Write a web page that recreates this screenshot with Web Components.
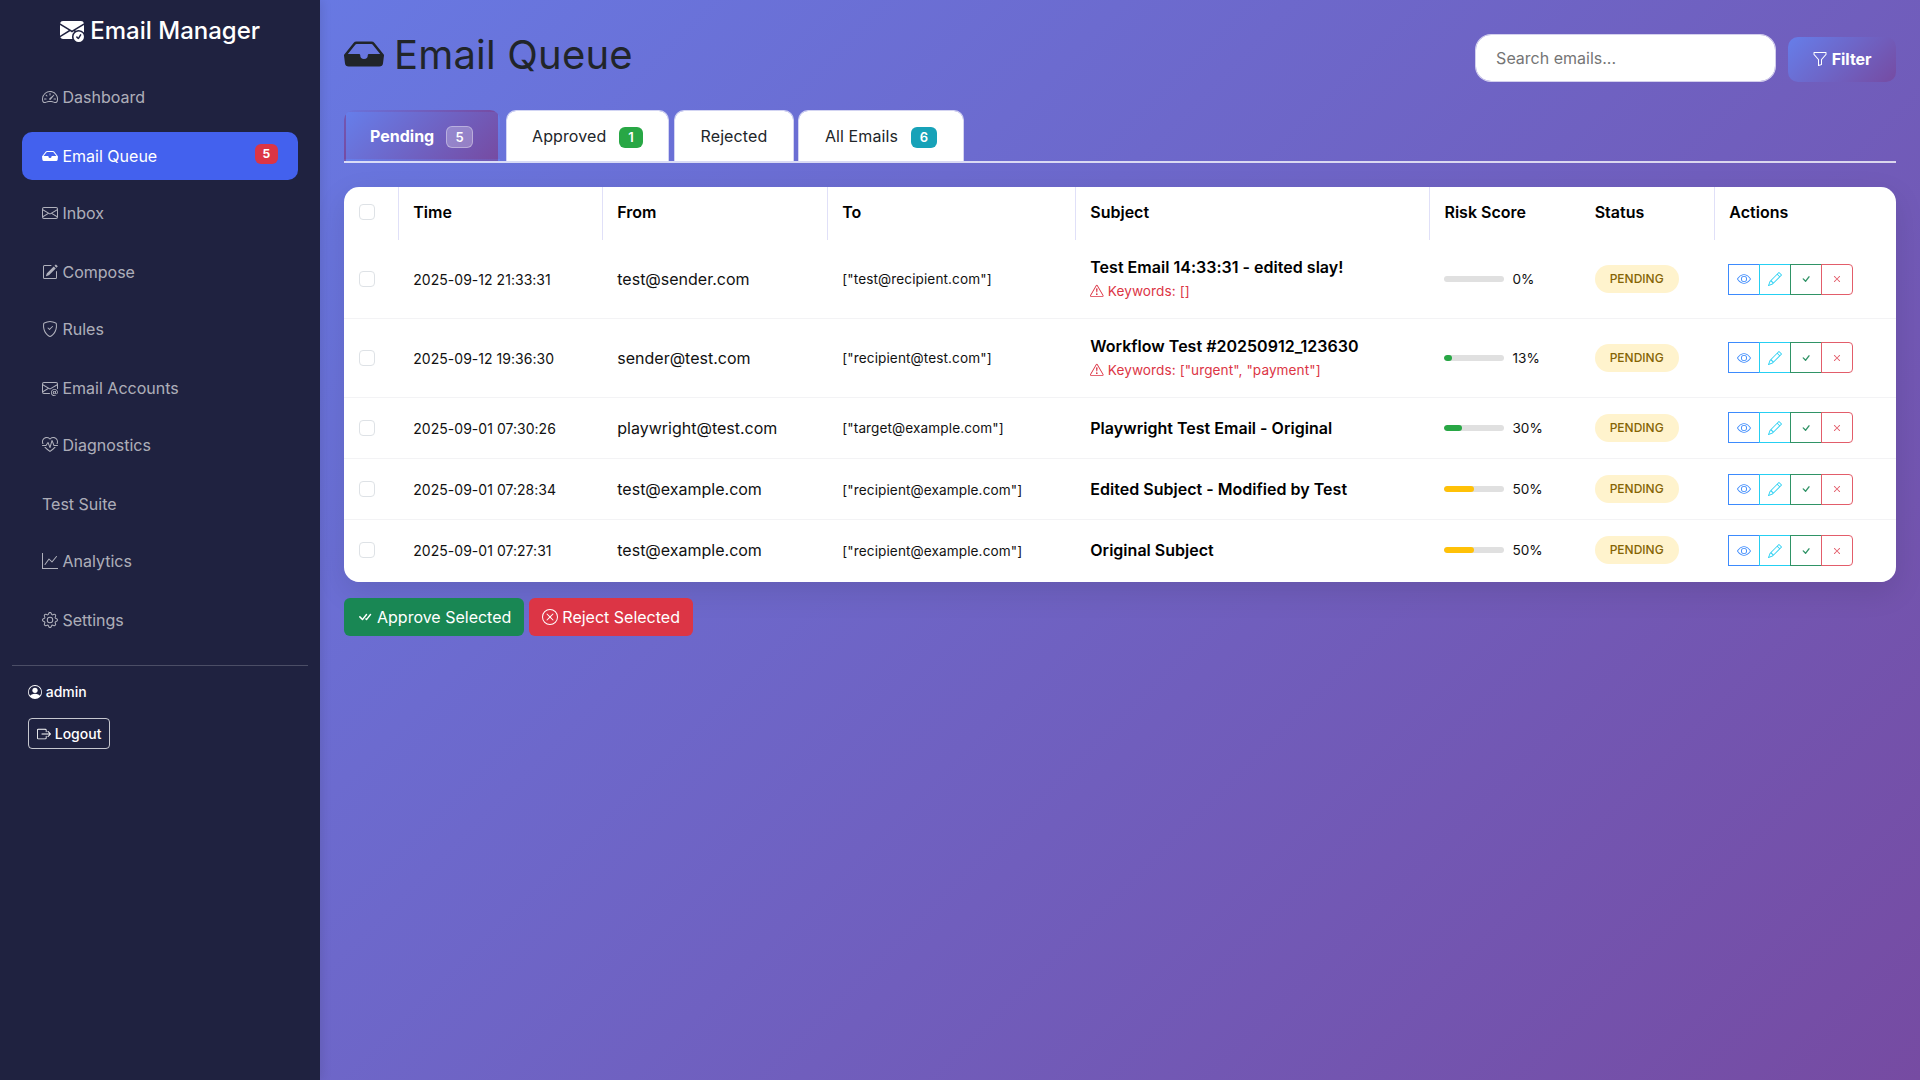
<!DOCTYPE html>
<html lang="en">
<head>
<meta charset="utf-8">
<title>Email Manager</title>
<style>
html,body{margin:0;height:100%}
body{font-family:Inter,"Liberation Sans",sans-serif;font-size:16px;line-height:1.5;color:#212529;overflow:hidden}
</style>
</head>
<body>
<email-app></email-app>
<script>
const ICONS={
'envelope-check-fill':['M.05 3.555A2 2 0 0 1 2 2h12a2 2 0 0 1 1.95 1.555L8 8.414zM0 4.697v7.104l5.803-3.558zm.192 8.159 6.57-4.027L8 9.586l1.239-.757.367.225A4.49 4.49 0 0 0 8 12.5c0 .526.09 1.03.256 1.5H2a2 2 0 0 1-1.808-1.144M16 4.697v4.974A4.5 4.5 0 0 0 12.5 8a4.5 4.5 0 0 0-1.965.45l-.338-.207z','M16 12.5a3.5 3.5 0 1 1-7 0 3.5 3.5 0 0 1 7 0m-1.993-1.679a.5.5 0 0 0-.686.172l-1.17 1.95-.547-.547a.5.5 0 0 0-.708.708l.774.773a.75.75 0 0 0 1.174-.144l1.335-2.226a.5.5 0 0 0-.172-.686'],
'speedometer2':['M8 4a.5.5 0 0 1 .5.5V6a.5.5 0 0 1-1 0V4.5A.5.5 0 0 1 8 4M3.732 5.732a.5.5 0 0 1 .707 0l.915.914a.5.5 0 1 1-.708.708l-.914-.915a.5.5 0 0 1 0-.707M2 10a.5.5 0 0 1 .5-.5h1.586a.5.5 0 0 1 0 1H2.5A.5.5 0 0 1 2 10m9.5 0a.5.5 0 0 1 .5-.5h1.5a.5.5 0 0 1 0 1H12a.5.5 0 0 1-.5-.5m.754-4.246a.39.39 0 0 0-.527-.02L7.547 9.31a.91.91 0 1 0 1.302 1.258l3.434-4.297a.39.39 0 0 0-.029-.518z','M0 10a8 8 0 1 1 15.547 2.661c-.442 1.253-1.845 1.602-2.932 1.25C11.309 13.488 9.475 13 8 13c-1.474 0-3.31.488-4.615.911-1.087.352-2.49.003-2.932-1.25A8 8 0 0 1 0 10m8-7a7 7 0 0 0-6.603 9.329c.203.575.923.876 1.68.63C4.397 12.533 6.358 12 8 12s3.604.532 4.923.96c.757.245 1.477-.056 1.68-.631A7 7 0 0 0 8 3'],
'inbox-fill':['M4.98 4a.5.5 0 0 0-.39.188L1.54 8H6a.5.5 0 0 1 .5.5 1.5 1.5 0 1 0 3 0A.5.5 0 0 1 10 8h4.46l-3.05-3.812A.5.5 0 0 0 11.02 4zm-1.17-.437A1.5 1.5 0 0 1 4.98 3h6.04a1.5 1.5 0 0 1 1.17.563l3.7 4.625a.5.5 0 0 1 .106.374l-.39 3.124A1.5 1.5 0 0 1 14.117 13H1.883a1.5 1.5 0 0 1-1.489-1.314l-.39-3.124a.5.5 0 0 1 .106-.374z'],
'envelope':['M0 4a2 2 0 0 1 2-2h12a2 2 0 0 1 2 2v8a2 2 0 0 1-2 2H2a2 2 0 0 1-2-2zm2-1a1 1 0 0 0-1 1v.217l7 4.2 7-4.2V4a1 1 0 0 0-1-1zm13 2.383-4.708 2.825L15 11.105zm-.034 6.876-5.64-3.471L8 9.583l-1.326-.795-5.64 3.47A1 1 0 0 0 2 13h12a1 1 0 0 0 .966-.741M1 11.105l4.708-2.897L1 5.383z'],
'pencil-square':['M15.502 1.94a.5.5 0 0 1 0 .706L14.459 3.69l-2-2L13.502.646a.5.5 0 0 1 .707 0l1.293 1.293zm-1.75 2.456-2-2L4.939 9.21a.5.5 0 0 0-.121.196l-.805 2.414a.25.25 0 0 0 .316.316l2.414-.805a.5.5 0 0 0 .196-.12l6.813-6.814z','M1 13.5A1.5 1.5 0 0 0 2.5 15h11a1.5 1.5 0 0 0 1.5-1.5v-6a.5.5 0 0 0-1 0v6a.5.5 0 0 1-.5.5h-11a.5.5 0 0 1-.5-.5v-11a.5.5 0 0 1 .5-.5H9a.5.5 0 0 0 0-1H2.5A1.5 1.5 0 0 0 1 2.5z'],
'shield-check':['M5.338 1.59a61 61 0 0 0-2.837.856.48.48 0 0 0-.328.39c-.554 4.157.726 7.19 2.253 9.188a10.7 10.7 0 0 0 2.287 2.233c.346.244.652.42.893.533q.18.085.293.118a1 1 0 0 0 .101.025 1 1 0 0 0 .1-.025q.114-.034.294-.118c.24-.113.547-.29.893-.533a10.7 10.7 0 0 0 2.287-2.233c1.527-1.997 2.807-5.031 2.253-9.188a.48.48 0 0 0-.328-.39c-.651-.213-1.75-.56-2.837-.855C9.552 1.29 8.531 1.067 8 1.067c-.53 0-1.552.223-2.662.524zM5.072.56C6.157.265 7.31 0 8 0s1.843.265 2.928.56c1.11.3 2.229.655 2.887.87a1.54 1.54 0 0 1 1.044 1.262c.596 4.477-.787 7.795-2.465 9.99a11.8 11.8 0 0 1-2.517 2.453 7 7 0 0 1-1.048.625c-.28.132-.581.24-.829.24s-.548-.108-.829-.24a7 7 0 0 1-1.048-.625 11.8 11.8 0 0 1-2.517-2.453C1.928 10.487.545 7.169 1.141 2.692A1.54 1.54 0 0 1 2.185 1.43 63 63 0 0 1 5.072.56','M10.854 5.146a.5.5 0 0 1 0 .708l-3 3a.5.5 0 0 1-.708 0l-1.5-1.5a.5.5 0 1 1 .708-.708L7.5 7.793l2.646-2.647a.5.5 0 0 1 .708 0'],
'envelope-at':['M2 2a2 2 0 0 0-2 2v8.01A2 2 0 0 0 2 14h5.5a.5.5 0 0 0 0-1H2a1 1 0 0 1-.966-.741l5.64-3.471L8 9.583l7-4.2V8.5a.5.5 0 0 0 1 0V4a2 2 0 0 0-2-2zm3.708 6.208L1 11.105V5.383zM1 4.217V4a1 1 0 0 1 1-1h12a1 1 0 0 1 1 1v.217l-7 4.2z','M14.247 14.269c1.01 0 1.587-.857 1.587-2.025v-.21C15.834 10.43 14.64 9 12.52 9h-.035C10.42 9 9 10.36 9 12.432v.214C9 14.82 10.438 16 12.358 16h.044c.594 0 1.018-.074 1.237-.175v-.73c-.245.11-.673.18-1.18.18h-.044c-1.334 0-2.571-.788-2.571-2.655v-.157c0-1.657 1.058-2.724 2.64-2.724h.04c1.535 0 2.484 1.05 2.484 2.326v.118c0 .975-.324 1.39-.639 1.39-.232 0-.41-.148-.41-.42v-2.19h-.906v.569h-.03c-.084-.298-.368-.63-.954-.63-.778 0-1.259.555-1.259 1.4v.528c0 .892.49 1.434 1.26 1.434.471 0 .896-.227 1.014-.643h.043c.118.42.617.648 1.12.648m-2.453-1.588v-.227c0-.546.227-.791.573-.791.297 0 .572.192.572.708v.367c0 .573-.253.744-.564.744-.354 0-.581-.215-.581-.8Z'],
'heart-pulse':['m8 2.748-.717-.737C5.6.281 2.514.878 1.4 3.053.918 3.995.78 5.323 1.508 7H.43c-2.128-5.697 4.165-8.83 7.394-5.857q.09.083.176.171a3 3 0 0 1 .176-.17c3.23-2.974 9.522.159 7.394 5.856h-1.078c.728-1.677.59-3.005.108-3.947C13.486.878 10.4.28 8.717 2.01zM2.212 10h1.315C4.593 11.183 6.05 12.458 8 13.795c1.949-1.337 3.407-2.612 4.473-3.795h1.315c-1.265 1.566-3.14 3.25-5.788 5-2.648-1.75-4.523-3.434-5.788-5','M10.464 3.314a.5.5 0 0 0-.945.049L7.921 8.956 6.464 5.314a.5.5 0 0 0-.88-.091L3.732 8H.5a.5.5 0 0 0 0 1H4a.5.5 0 0 0 .416-.223l1.473-2.209 1.647 4.118a.5.5 0 0 0 .945-.049l1.598-5.593 1.457 3.642A.5.5 0 0 0 12 9h3.5a.5.5 0 0 0 0-1h-3.162z'],
'graph-up':['M0 0h1v15h15v1H0zm14.817 3.113a.5.5 0 0 1 .07.704l-4.5 5.5a.5.5 0 0 1-.74.037L7.06 6.767l-3.656 5.027a.5.5 0 0 1-.808-.588l4-5.5a.5.5 0 0 1 .758-.06l2.609 2.61 4.15-5.073a.5.5 0 0 1 .704-.07'],
'gear':['M8 4.754a3.246 3.246 0 1 0 0 6.492 3.246 3.246 0 0 0 0-6.492M5.754 8a2.246 2.246 0 1 1 4.492 0 2.246 2.246 0 0 1-4.492 0','M9.796 1.343c-.527-1.79-3.065-1.79-3.592 0l-.094.319a.873.873 0 0 1-1.255.52l-.292-.16c-1.64-.892-3.433.902-2.54 2.541l.159.292a.873.873 0 0 1-.52 1.255l-.319.094c-1.79.527-1.79 3.065 0 3.592l.319.094a.873.873 0 0 1 .52 1.255l-.16.292c-.892 1.64.901 3.434 2.541 2.54l.292-.159a.873.873 0 0 1 1.255.52l.094.319c.527 1.79 3.065 1.79 3.592 0l.094-.319a.873.873 0 0 1 1.255-.52l.292.16c1.64.893 3.434-.902 2.54-2.541l-.159-.292a.873.873 0 0 1 .52-1.255l.319-.094c1.79-.527 1.79-3.065 0-3.592l-.319-.094a.873.873 0 0 1-.52-1.255l.16-.292c.893-1.64-.902-3.433-2.541-2.54l-.292.159a.873.873 0 0 1-1.255-.52zm-2.633.283c.246-.835 1.428-.835 1.674 0l.094.319a1.873 1.873 0 0 0 2.693 1.115l.291-.16c.764-.415 1.6.42 1.184 1.185l-.159.292a1.873 1.873 0 0 0 1.116 2.692l.318.094c.835.246.835 1.428 0 1.674l-.319.094a1.873 1.873 0 0 0-1.115 2.693l.16.291c.415.764-.42 1.6-1.185 1.184l-.291-.159a1.873 1.873 0 0 0-2.693 1.116l-.094.318c-.246.835-1.428.835-1.674 0l-.094-.319a1.873 1.873 0 0 0-2.692-1.115l-.292.16c-.764.415-1.6-.42-1.184-1.185l.159-.291A1.873 1.873 0 0 0 1.945 8.93l-.319-.094c-.835-.246-.835-1.428 0-1.674l.319-.094A1.873 1.873 0 0 0 3.06 4.377l-.16-.292c-.415-.764.42-1.6 1.185-1.184l.292.159a1.873 1.873 0 0 0 2.692-1.115z'],
'person-circle':['M11 6a3 3 0 1 1-6 0 3 3 0 0 1 6 0','M0 8a8 8 0 1 1 16 0A8 8 0 0 1 0 8m8-7a7 7 0 0 0-5.468 11.37C3.242 11.226 4.805 10 8 10s4.757 1.225 5.468 2.37A7 7 0 0 0 8 1'],
'box-arrow-right':['M10 12.5a.5.5 0 0 1-.5.5h-8a.5.5 0 0 1-.5-.5v-9a.5.5 0 0 1 .5-.5h8a.5.5 0 0 1 .5.5v2a.5.5 0 0 0 1 0v-2A1.5 1.5 0 0 0 9.5 2h-8A1.5 1.5 0 0 0 0 3.5v9A1.5 1.5 0 0 0 1.5 14h8a1.5 1.5 0 0 0 1.5-1.5v-2a.5.5 0 0 0-1 0z','M15.854 8.354a.5.5 0 0 0 0-.708l-3-3a.5.5 0 0 0-.708.708L14.293 7.5H5.5a.5.5 0 0 0 0 1h8.793l-2.147 2.146a.5.5 0 0 0 .708.708z'],
'funnel':['M1.5 1.5A.5.5 0 0 1 2 1h12a.5.5 0 0 1 .5.5v2a.5.5 0 0 1-.128.334L10 8.692V13.5a.5.5 0 0 1-.342.474l-3 1A.5.5 0 0 1 6 14.5V8.692L1.628 3.834A.5.5 0 0 1 1.5 3.5zm1 .5v1.308l4.372 4.858A.5.5 0 0 1 7 8.5v5.306l2-.666V8.5a.5.5 0 0 1 .128-.334L13.5 3.308V2z'],
'exclamation-triangle':['M7.938 2.016A.13.13 0 0 1 8.002 2a.13.13 0 0 1 .063.016.15.15 0 0 1 .054.057l6.857 11.667c.036.06.035.124.002.183a.2.2 0 0 1-.054.06.1.1 0 0 1-.066.017H1.146a.1.1 0 0 1-.066-.017.2.2 0 0 1-.054-.06.18.18 0 0 1 .002-.183L7.884 2.073a.15.15 0 0 1 .054-.057m1.044-.45a1.13 1.13 0 0 0-1.96 0L.165 13.233c-.457.778.091 1.767.98 1.767h13.713c.889 0 1.438-.99.98-1.767z','M7.002 12a1 1 0 1 1 2 0 1 1 0 0 1-2 0M7.1 5.995a.905.905 0 1 1 1.8 0l-.35 3.507a.552.552 0 0 1-1.1 0z'],
'eye':['M16 8s-3-5.5-8-5.5S0 8 0 8s3 5.5 8 5.5S16 8 16 8M1.173 8a13 13 0 0 1 1.66-2.043C4.12 4.668 5.88 3.5 8 3.5s3.879 1.168 5.168 2.457A13 13 0 0 1 14.828 8q-.086.13-.195.288c-.335.48-.83 1.12-1.465 1.755C11.879 11.332 10.119 12.5 8 12.5s-3.879-1.168-5.168-2.457A13 13 0 0 1 1.172 8z','M8 5.5a2.5 2.5 0 1 0 0 5 2.5 2.5 0 0 0 0-5M4.5 8a3.5 3.5 0 1 1 7 0 3.5 3.5 0 0 1-7 0'],
'pencil':['M12.146.146a.5.5 0 0 1 .708 0l3 3a.5.5 0 0 1 0 .708l-10 10a.5.5 0 0 1-.168.11l-5 2a.5.5 0 0 1-.65-.65l2-5a.5.5 0 0 1 .11-.168zM11.207 2.5 13.5 4.793 14.793 3.5 12.5 1.207zm1.586 3L10.5 3.207 4 9.707V10h.5a.5.5 0 0 1 .5.5v.5h.5a.5.5 0 0 1 .5.5v.5h.293zm-9.761 5.175-.106.106-1.528 3.821 3.821-1.528.106-.106A.5.5 0 0 1 5 12.5V12h-.5a.5.5 0 0 1-.5-.5V11h-.5a.5.5 0 0 1-.468-.325'],
'check':['M10.97 4.97a.75.75 0 0 1 1.07 1.05l-3.99 4.99a.75.75 0 0 1-1.08.02L4.324 8.384a.75.75 0 1 1 1.06-1.06l2.094 2.093 3.473-4.425z'],
'check-all':['M8.97 4.97a.75.75 0 0 1 1.07 1.05l-3.99 4.99a.75.75 0 0 1-1.08.02L2.324 8.384a.75.75 0 1 1 1.06-1.06l2.094 2.093L8.95 4.992zm-.92 5.14.92.92a.75.75 0 0 0 1.079-.02l3.992-4.99a.75.75 0 1 0-1.091-1.028L9.477 9.417l-.485-.486z'],
'x':['M4.646 4.646a.5.5 0 0 1 .708 0L8 7.293l2.646-2.647a.5.5 0 0 1 .708.708L8.707 8l2.647 2.646a.5.5 0 0 1-.708.708L8 8.707l-2.646 2.647a.5.5 0 0 1-.708-.708L7.293 8 4.646 5.354a.5.5 0 0 1 0-.708'],
'x-circle':['M8 15A7 7 0 1 1 8 1a7 7 0 0 1 0 14m0 1A8 8 0 1 0 8 0a8 8 0 0 0 0 16','M4.646 4.646a.5.5 0 0 1 .708 0L8 7.293l2.646-2.647a.5.5 0 0 1 .708.708L8.707 8l2.647 2.646a.5.5 0 0 1-.708.708L8 8.707l-2.646 2.647a.5.5 0 0 1-.708-.708L7.293 8 4.646 5.354a.5.5 0 0 1 0-.708']
};

function define(name, render){
  customElements.define(name, class extends HTMLElement{
    connectedCallback(){
      if(this.shadowRoot) return;
      this.attachShadow({mode:'open'}).innerHTML=render(this);
    }
  });
}

define('ui-icon', el=>`<style>
:host{display:inline-block;width:1em;height:1em;vertical-align:-.125em;line-height:1}
svg{display:block;width:100%;height:100%;fill:currentColor}
</style><svg viewBox="0 0 16 16" aria-hidden="true">${ICONS[el.getAttribute('name')].map(d=>`<path fill-rule="evenodd" d="${d}"/>`).join('')}</svg>`);

define('nav-item', el=>{
  const icon=el.getAttribute('icon'), badge=el.getAttribute('badge');
  return `<style>
:host{display:block;color:rgba(255,255,255,.65)}
a{display:flex;justify-content:space-between;box-sizing:border-box;height:48px;padding:12px 19.6px;border-radius:10px;line-height:24px}
:host([active]) a{background:#4361ee;color:#fff}
b{align-self:flex-start;font-size:12px;line-height:12px;font-weight:700;background:#dc3545;color:#fff;border-radius:6px;padding:4px 7.8px}
</style><a><span>${icon?`<ui-icon name="${icon}"></ui-icon> `:''}<slot></slot></span>${badge?`<b>${badge}</b>`:''}</a>`;
});

define('side-bar', ()=>`<style>
:host{display:flex;flex-direction:column;box-sizing:border-box;width:320px;height:100%;flex:none;background:#1f2240;color:#fff;padding:12px 12px 0;box-shadow:2px 0 10px rgba(0,0,0,.1);position:relative}
h4{margin:4px 0 0;font-size:24px;font-weight:500;line-height:30px;text-align:center}
nav{display:flex;flex-direction:column;gap:10.1px;padding:27.6px 10.4px 0;margin-bottom:20.5px}
nav-item:nth-child(odd){margin:-1px 0 1px}
.user{border-top:1px solid rgba(255,255,255,.2);padding:15px 16px;font-size:14px;line-height:21px;display:flex;flex-direction:column;align-items:flex-start;gap:16px;font-weight:500}
button{font:inherit;color:#fff;background:none;border:1px solid rgba(255,255,255,.75);border-radius:4px;padding:4px 8px;line-height:21px}
</style>
<h4><ui-icon name="envelope-check-fill"></ui-icon> Email Manager</h4>
<nav>
<nav-item icon="speedometer2">Dashboard</nav-item>
<nav-item icon="inbox-fill" active badge="5">Email Queue</nav-item>
<nav-item icon="envelope">Inbox</nav-item>
<nav-item icon="pencil-square">Compose</nav-item>
<nav-item icon="shield-check">Rules</nav-item>
<nav-item icon="envelope-at">Email Accounts</nav-item>
<nav-item icon="heart-pulse">Diagnostics</nav-item>
<nav-item>Test Suite</nav-item>
<nav-item icon="graph-up">Analytics</nav-item>
<nav-item icon="gear">Settings</nav-item>
</nav>
<div class="user"><span><ui-icon name="person-circle"></ui-icon> admin</span>
<button><ui-icon name="box-arrow-right"></ui-icon> Logout</button></div>`);

define('page-header', ()=>`<style>
:host{display:flex;justify-content:space-between;align-items:flex-start}
h1{margin:7px 0 0;font-size:40px;line-height:48px;font-weight:400;letter-spacing:.18px;color:#212529}
h1 ui-icon{margin-right:-1.4px}
.tools{display:flex;align-items:flex-end;gap:12px;padding-top:10px}
input{box-sizing:border-box;width:300.4px;height:47.5px;border:1px solid rgba(255,255,255,.7);background:#fff;background-clip:padding-box;border-radius:16px;padding:0 20px;font:16px Inter,sans-serif}
input::placeholder{color:#757575;opacity:1}
button{border:0;height:45px;border-radius:10px;padding:0 24.5px 1px;font:700 16px Inter,sans-serif;letter-spacing:-.05px;color:#fff;background:linear-gradient(135deg,#667eea,#764ba2)}
</style><h1><ui-icon name="inbox-fill"></ui-icon> Email Queue</h1>
<div class="tools"><input placeholder="Search emails..."><button><ui-icon name="funnel"></ui-icon> Filter</button></div>`);

define('queue-tab', el=>{
  const n=el.getAttribute('count');
  return `<style>
:host{display:block;box-sizing:border-box;height:51px;padding:12.7px 25.5px 0;border:1px solid rgba(255,255,255,.7);border-bottom:0;border-radius:10px 10px 0 0;background:#fff;background-clip:padding-box;color:#212529;line-height:24px;letter-spacing:.1px}
:host([active]){background:linear-gradient(135deg,#667eea,#764ba2);background-origin:padding-box;background-clip:border-box;border:2px solid transparent;padding:11.7px 25px 0 24px;margin-right:1px;color:#fff;font-weight:700;letter-spacing:0}
b{display:inline-block;box-sizing:border-box;height:21.5px;font-size:13px;line-height:21.5px;font-weight:600;color:#fff;background:var(--c);border-radius:6px;padding:0 9.2px;margin-left:8px}
:host([active]) b{height:22px;line-height:20px;border:1px solid rgba(255,255,255,.35);padding:0 8.4px}
</style><slot></slot>${n?` <b>${n}</b>`:''}`;
});

define('tab-strip', ()=>`<style>
:host{display:flex;gap:4.6px;border-bottom:2px solid rgba(255,255,255,.75)}
</style><queue-tab active count="5" style="--c:rgba(255,255,255,.25)">Pending</queue-tab>
<queue-tab count="1" style="--c:#28a745">Approved</queue-tab>
<queue-tab>Rejected</queue-tab>
<queue-tab count="6" style="--c:#17a2b8">All Emails</queue-tab>`);

const GRID='display:grid;grid-template-columns:54.6px 204px 225px 248px 354.2px 150.2px 134.7px 1fr';
const BOX='i{display:block;box-sizing:border-box;width:16px;height:16px;border:1px solid #dee2e6;border-radius:4px}';

define('queue-head', ()=>`<style>
:host{${GRID};height:53.6px;font-weight:600;color:#000;line-height:24px}
div{box-sizing:border-box;padding:13.6px 14.7px 0;border-right:1px solid #e0e0f8}
.n{border-color:transparent}${BOX}i{margin-top:4px}
</style><div><i></i></div><div>Time</div><div>From</div><div>To</div><div>Subject</div><div class="n">Risk Score</div><div>Status</div><div class="n">Actions</div>`);

define('risk-meter', el=>`<style>
:host{display:flex;align-items:center;gap:8px;font-size:13.6px}
.t{width:60px;height:6px;border-radius:3px;background:#e0e0e0;overflow:hidden}
.f{height:6px;border-radius:3px;width:${el.getAttribute('value')}%;background:${el.getAttribute('value')>=50?'#ffc107':'#28a745'}}
</style><div class="t"><div class="f"></div></div><span>${el.getAttribute('value')}%</span>`);

define('status-pill', ()=>`<style>
:host{display:block;width:max-content;font-size:12px;line-height:18px;font-weight:500;padding:5px 15px;border-radius:20px;background:#fff3cd;color:#856404;text-transform:uppercase}
</style><slot></slot>`);

define('row-actions', ()=>`<style>
:host{display:flex}
button{box-sizing:border-box;width:31.8px;height:31px;margin-left:-1px;padding:0;border:1px solid;background:none;font:14px/21px Inter,sans-serif;color:var(--c);border-color:var(--c)}
button:first-child{margin:0;border-radius:4px 0 0 4px}button:last-child{border-radius:0 4px 4px 0}
</style><button style="--c:#3d8bfd"><ui-icon name="eye"></ui-icon></button><button style="--c:#25cff2"><ui-icon name="pencil"></ui-icon></button><button style="--c:#2f9366"><ui-icon name="check"></ui-icon></button><button style="--c:#e35d6a"><ui-icon name="x"></ui-icon></button>`);

define('queue-row', el=>{
  const a=k=>el.getAttribute(k), kw=a('keywords');
  return `<style>
:host{${GRID};box-sizing:border-box;height:${kw?78.7:61.4}px;align-items:center;border-bottom:1px solid #f3f3f5;color:#111}
:host(:last-child){border-bottom-color:#fff;padding-bottom:.4px}
div{padding:0 14.7px;white-space:nowrap}
.s{font-size:13.6px;padding-top:1px;letter-spacing:.1px}
.d{font-size:14px;letter-spacing:.03px}
b{display:block;font-weight:600;color:#000;line-height:24px;letter-spacing:.02px}
small{display:block;font-size:13.6px;line-height:21px;color:#dc3545;margin:2px 0 1px;letter-spacing:.08px}${BOX}
</style><div><i></i></div><div class="s d">${a('time')}</div><div>${a('from')}</div><div class="s">["${a('to')}"]</div>
<div><b>${a('subject')}</b>${kw?`<small><ui-icon name="exclamation-triangle"></ui-icon> Keywords: ${kw}</small>`:''}</div>
<div><risk-meter value="${a('risk')}"></risk-meter></div><div><status-pill>PENDING</status-pill></div><div><row-actions></row-actions></div>`;
});

define('queue-table', ()=>`<style>
:host{display:block;background:#fff;border-radius:15px;overflow:hidden;box-shadow:0 10px 30px rgba(0,0,0,.1)}
</style><queue-head></queue-head>
<section>
<queue-row time="2025-09-12 21:33:31" from="test@sender.com" to="test@recipient.com" subject="Test Email 14:33:31 - edited slay!" keywords="[]" risk="0"></queue-row>
<queue-row time="2025-09-12 19:36:30" from="sender@test.com" to="recipient@test.com" subject="Workflow Test #20250912_123630" keywords='["urgent", "payment"]' risk="13"></queue-row>
<queue-row time="2025-09-01 07:30:26" from="playwright@test.com" to="target@example.com" subject="Playwright Test Email - Original" risk="30"></queue-row>
<queue-row time="2025-09-01 07:28:34" from="test@example.com" to="recipient@example.com" subject="Edited Subject - Modified by Test" risk="50"></queue-row>
<queue-row time="2025-09-01 07:27:31" from="test@example.com" to="recipient@example.com" subject="Original Subject" risk="50"></queue-row>
</section>`);

define('bulk-actions', ()=>`<style>
:host{display:flex;gap:5px}
button{border:0;border-radius:6px;height:38px;padding:0 12.5px;font:16px/24px Inter,sans-serif;color:#fff}
.a{background:#198754}.r{background:#dc3545;padding:0 13.5px 0 13px}
</style><button class="a"><ui-icon name="check-all"></ui-icon> Approve Selected</button><button class="r"><ui-icon name="x-circle"></ui-icon> Reject Selected</button>`);

define('email-app', ()=>`<style>
:host{display:flex;height:1080px;background:linear-gradient(135deg,#667eea 0%,#764ba2 100%)}
main{flex:1;min-width:0;padding:24px 24px 0;display:flex;flex-direction:column}
tab-strip{margin-top:28.4px}queue-table{margin-top:23.8px}bulk-actions{margin-top:15.7px}
</style><side-bar></side-bar><main><page-header></page-header><tab-strip></tab-strip><queue-table></queue-table><bulk-actions></bulk-actions></main>`);
</script>
</body>
</html>
